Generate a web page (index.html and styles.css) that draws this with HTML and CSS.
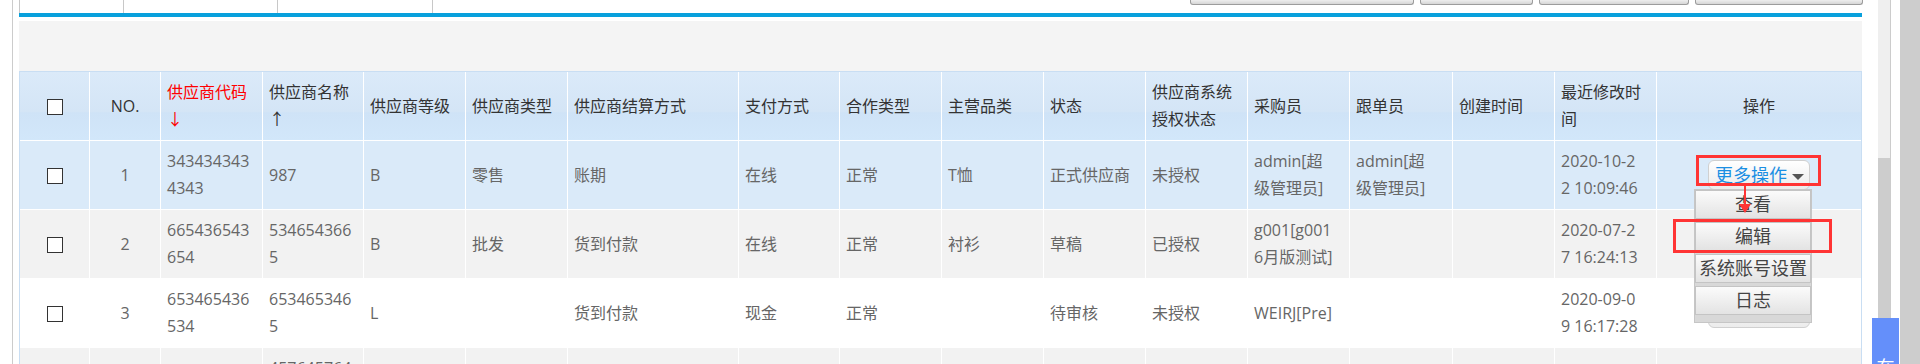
FILE: index.html
```html
<!DOCTYPE html>
<html lang="zh-CN">
<head>
<meta charset="utf-8">
<title>供应商列表</title>
<link rel="stylesheet" href="styles.css">
</head>
<body>
<div class="page">
  <div class="frame">
    <div class="content">
      <div class="topbar">
        <div class="tabs">
          <div class="tab tab-1 active"><span>全部</span></div>
          <div class="tab tab-2"><span>正式供应商</span></div>
          <div class="tab tab-3"><span>待审核供应商</span></div>
        </div>
        <div class="tools">
          <div class="tool tool-1"></div>
          <div class="tool tool-2"></div>
          <div class="tool tool-3"></div>
          <div class="tool tool-4"></div>
        </div>
      </div>
      <div class="bluebar"></div>
      <div class="filter"></div>
      <table class="grid">
        <colgroup>
          <col class="c-chk"><col class="c-no"><col class="c-w102"><col class="c-w101"><col class="c-w102"><col class="c-w102">
          <col class="c-w171"><col class="c-w101"><col class="c-w102"><col class="c-w102"><col class="c-w102"><col class="c-w102">
          <col class="c-w102"><col class="c-w103"><col class="c-w102"><col class="c-w102"><col class="c-op">
        </colgroup>
        <thead>
          <tr>
            <th class="center"><input type="checkbox" class="chk"></th>
            <th class="center">NO.</th>
            <th class="sorted">供应商代码<br>↓</th>
            <th>供应商名称<br>↑</th>
            <th>供应商等级</th>
            <th>供应商类型</th>
            <th>供应商结算方式</th>
            <th>支付方式</th>
            <th>合作类型</th>
            <th>主营品类</th>
            <th>状态</th>
            <th>供应商系统<br>授权状态</th>
            <th>采购员</th>
            <th>跟单员</th>
            <th>创建时间</th>
            <th>最近修改时<br>间</th>
            <th class="center last">操作</th>
          </tr>
        </thead>
        <tbody>
          <tr class="row-selected">
            <td class="center"><input type="checkbox" class="chk"></td>
            <td class="center">1</td>
            <td>343434343<br>4343</td>
            <td>987</td>
            <td>B</td>
            <td>零售</td>
            <td>账期</td>
            <td>在线</td>
            <td>正常</td>
            <td>T恤</td>
            <td>正式供应商</td>
            <td>未授权</td>
            <td>admin[超<br>级管理员]</td>
            <td>admin[超<br>级管理员]</td>
            <td></td>
            <td>2020-10-2<br>2 10:09:46</td>
            <td class="center last">
              <div class="more">
                <span class="more-btn">更多操作<i class="caret"></i></span>
                <div class="menu">
                  <div class="menu-item">查看</div>
                  <div class="menu-item">编辑</div>
                  <div class="menu-item">系统账号设置</div>
                  <div class="menu-item">日志</div>
                </div>
                <div class="mark mark-btn"></div>
                <div class="mark mark-edit"></div>
                <div class="mark-arrow"></div>
              </div>
            </td>
          </tr>
          <tr class="row-even">
            <td class="center"><input type="checkbox" class="chk"></td>
            <td class="center">2</td>
            <td>665436543<br>654</td>
            <td>534654366<br>5</td>
            <td>B</td>
            <td>批发</td>
            <td>货到付款</td>
            <td>在线</td>
            <td>正常</td>
            <td>衬衫</td>
            <td>草稿</td>
            <td>已授权</td>
            <td>g001[g001<br>6月版测试]</td>
            <td></td>
            <td></td>
            <td>2020-07-2<br>7 16:24:13</td>
            <td class="center last"><div class="more"><span class="more-btn">更多操作<i class="caret"></i></span></div></td>
          </tr>
          <tr class="row-odd">
            <td class="center"><input type="checkbox" class="chk"></td>
            <td class="center">3</td>
            <td>653465436<br>534</td>
            <td>653465346<br>5</td>
            <td>L</td>
            <td></td>
            <td>货到付款</td>
            <td>现金</td>
            <td>正常</td>
            <td></td>
            <td>待审核</td>
            <td>未授权</td>
            <td>WEIRJ[Pre]</td>
            <td></td>
            <td></td>
            <td>2020-09-0<br>9 16:17:28</td>
            <td class="center last"><div class="more"><span class="more-btn">更多操作<i class="caret"></i></span></div></td>
          </tr>
          <tr class="row-even">
            <td class="center"><input type="checkbox" class="chk"></td>
            <td class="center">4</td>
            <td>4576</td>
            <td>457645764<br>5</td>
            <td>A</td>
            <td>零售</td>
            <td>账期</td>
            <td>在线</td>
            <td>正常</td>
            <td>T恤</td>
            <td>正式供应商</td>
            <td>未授权</td>
            <td>admin</td>
            <td></td>
            <td></td>
            <td></td>
            <td class="center last"><div class="more"><span class="more-btn">更多操作<i class="caret"></i></span></div></td>
          </tr>
        </tbody>
      </table>
    </div>
    <div class="vscroll"><div class="vthumb"></div></div>
  </div>
  <div class="gap"></div>
  <div class="outer-scroll"></div>
  <div class="float-service">在线客服</div>
</div>
</body>
</html>
```

FILE: styles.css
```css
* { box-sizing: border-box; }

html, body {
  margin: 0;
  padding: 0;
  background: #ffffff;
  overflow: hidden;
}

body {
  font-family: "Open Sans", "Noto Sans CJK SC", sans-serif;
  font-size: 16px;
  color: #666666;
}

.page {
  display: flex;
  height: 364px;
  width: 1920px;
  position: relative;
  overflow: hidden;
}

.frame {
  display: flex;
  margin-left: 12px;
  border-left: 1px solid #cccccc;
  border-right: 1px solid #cccccc;
  width: 1879px;
  height: 364px;
}

.content {
  width: 1857px;
  padding-left: 6px;
  margin-right: 8px;
  flex: none;
}

/* top strip (tabs + toolbar, scrolled mostly out of view) */
.topbar {
  display: flex;
  height: 13px;
  overflow: hidden;
}

.tabs {
  display: flex;
}

.tab {
  display: flex;
  align-items: flex-end;
  justify-content: center;
  height: 13px;
  border-left: 1px solid #c8c8c8;
  overflow: hidden;
  color: #aaaaaa;
  font-size: 16px;
}
.tab span {
  display: block;
  line-height: 16px;
  margin-bottom: 13px;
  white-space: nowrap;
}
.tab.active { color: #222222; }
.tab-1 { width: 104px; }
.tab-2 { width: 154px; }
.tab-3 { width: 156px; border-right: 1px solid #c8c8c8; }

.tools {
  display: flex;
  gap: 6px;
  margin-left: auto;
  margin-right: 7px;
}

.tool {
  height: 5px;
  border: 1px solid #9c9c9c;
  border-top: none;
  border-radius: 0 0 3px 3px;
  background: linear-gradient(#eeeeee, #d6d6d6);
}
.tool-1 { width: 224px; }
.tool-2 { width: 113px; }
.tool-3 { width: 150px; }
.tool-4 { width: 168px; }

.bluebar {
  width: 1843px;
  height: 4px;
  background: #08a0dc;
}

.filter {
  width: 1843px;
  height: 50px;
  margin-top: 4px;
  background: #f4f4f4;
}

/* table */
.grid {
  width: 1843px;
  table-layout: fixed;
  border-collapse: separate;
  border-spacing: 0;
  border: 1px solid #c9def3;
  border-bottom: none;
}

.c-chk { width: 70px; }
.c-no { width: 71px; }
.c-w101 { width: 101px; }
.c-w102 { width: 102px; }
.c-w103 { width: 103px; }
.c-w171 { width: 171px; }
.c-op { width: 204px; }

.grid th,
.grid td {
  height: 54px;
  padding: 7px 6px;
  line-height: 27px;
  border-right: 1px solid #ffffff;
  border-bottom: 1px solid #ffffff;
  text-align: left;
  vertical-align: middle;
  white-space: nowrap;
  font-weight: normal;
}

.grid th.last,
.grid td.last { border-right: none; }

.grid th {
  color: #333333;
  background: linear-gradient(to bottom, #dbeaf9 0%, #d4e5f6 58%, #cfe3f7 60%, #d2e7fa 100%);
}

.grid th.sorted { color: #ff0000; }

.grid .center { text-align: center; }

.row-selected td { background: #daeaf9; }
.row-even td { background: #f2f2f2; }
.row-odd td { background: #ffffff; }

.chk {
  appearance: none;
  -webkit-appearance: none;
  display: inline-block;
  width: 16px;
  height: 16px;
  margin: 0;
  border: 1px solid #333333;
  background: #ffffff;
  vertical-align: middle;
}

/* more-actions dropdown */
.more {
  position: relative;
  display: inline-block;
  vertical-align: middle;
}

.more-btn {
  display: flex;
  align-items: center;
  width: 102px;
  height: 30px;
  padding: 0 6px;
  border: 1px solid #d0d0d0;
  border-radius: 6px;
  background: linear-gradient(#ffffff, #ececec);
  color: #1b8fe3;
  font-size: 18px;
  line-height: 28px;
}

.caret {
  width: 0;
  height: 0;
  margin-left: 5px;
  margin-top: 3px;
  border-top: 6px solid #555555;
  border-left: 6px solid transparent;
  border-right: 6px solid transparent;
}

.menu {
  position: absolute;
  left: -14px;
  top: 29px;
  width: 118px;
  padding-bottom: 4px;
  background: #d8d8d8;
  border: 1px solid #c6c6c6;
  z-index: 10;
}

.menu-item {
  height: 29px;
  margin-bottom: 3px;
  border: 1px solid #c4c4c4;
  background: linear-gradient(#fbfbfb, #e3e3e3);
  color: #444444;
  font-size: 18px;
  line-height: 27px;
  text-align: center;
}

/* annotation overlays */
.mark {
  position: absolute;
  border: 3px solid #ff3434;
  z-index: 20;
}
.mark-btn {
  left: -12px;
  top: -5px;
  width: 125px;
  height: 31px;
}
.mark-edit {
  left: -35px;
  top: 59px;
  width: 159px;
  height: 34px;
}

.mark-arrow {
  position: absolute;
  left: 36px;
  top: 26px;
  width: 2px;
  height: 20px;
  background: #ff3434;
  z-index: 21;
}
.mark-arrow::after {
  content: "";
  position: absolute;
  left: -5px;
  top: 18px;
  border-top: 9px solid #ff3434;
  border-left: 6px solid transparent;
  border-right: 6px solid transparent;
}

/* scrollbars */
.vscroll {
  width: 20px;
  height: 364px;
  background: #efefef;
  padding-top: 158px;
}
.vthumb {
  height: 206px;
  background: #cdcdcd;
}

.gap {
  width: 9px;
}

.outer-scroll {
  width: 20px;
  height: 364px;
  background: #cdcdcd;
}

.float-service {
  position: absolute;
  left: 1872px;
  top: 318px;
  width: 27px;
  height: 100px;
  padding-top: 38px;
  background: #648ffa;
  color: #ffffff;
  font-size: 18px;
  line-height: 22px;
  text-align: center;
  word-break: break-all;
  z-index: 30;
}
```
